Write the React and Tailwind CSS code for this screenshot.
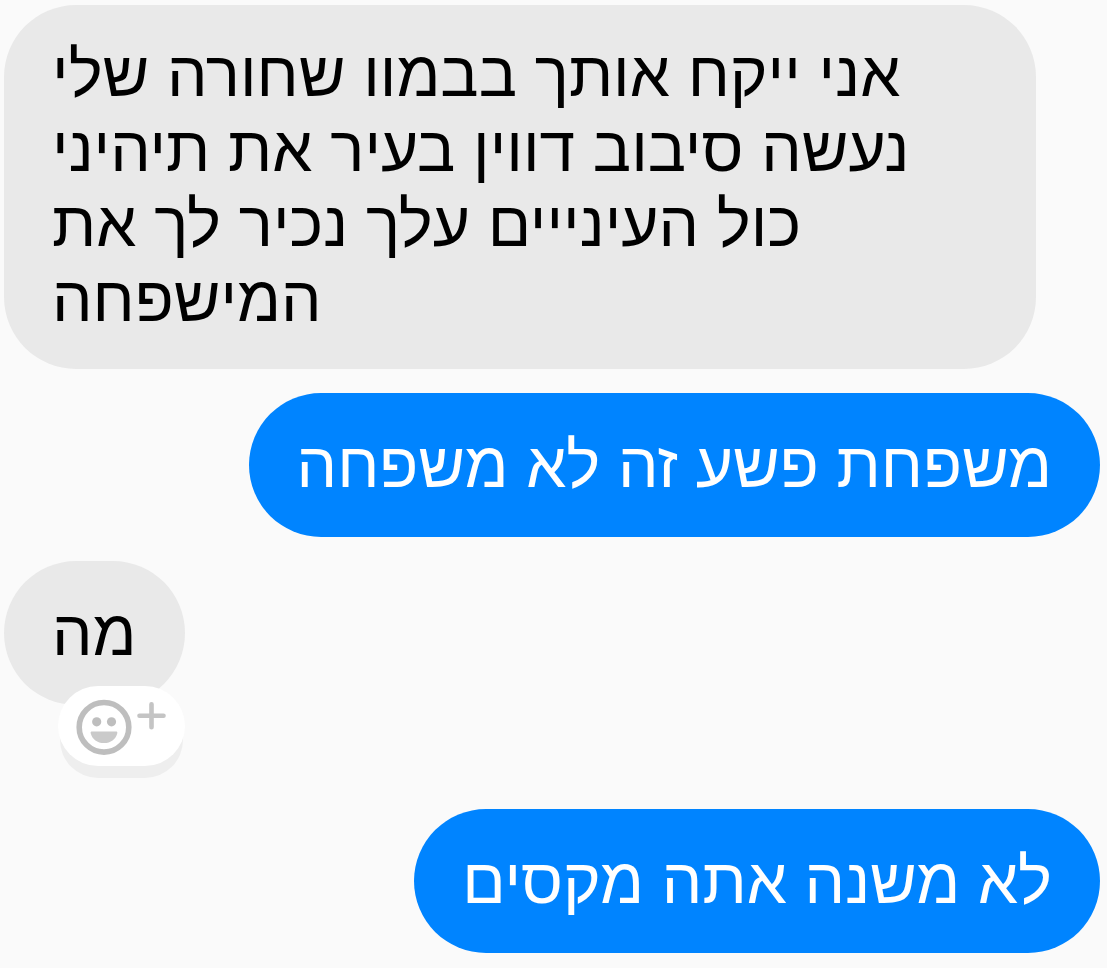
import React from "react";

function ReactionButton() {
  return (
    <button
      type="button"
      aria-label="הוספת תגובה"
      className="absolute top-[125px] left-[54px] h-20 w-[127px] rounded-full bg-white shadow-[0_14px_0_-2px_#eeeeee]"
    >
      <svg viewBox="0 0 127 80" fill="none" className="block h-20 w-[127px]">
        <circle cx="46" cy="41.3" r="24.8" stroke="#bebebe" strokeWidth="5.6" />
        <circle cx="38.7" cy="35.8" r="4.6" fill="#bebebe" />
        <circle cx="53.5" cy="35.8" r="4.6" fill="#bebebe" />
        <path
          d="M34 45.6h24c1 0 1.6.6 1.3 1.6C57.6 53.4 52.8 57 46 57s-11.6-3.6-13.3-9.8c-.3-1 .3-1.6 1.3-1.6Z"
          fill="#cacaca"
        />
        <path
          d="M81.5 29.8h24M93.5 18.3v23"
          stroke="#c4c4c4"
          strokeWidth="4.6"
          strokeLinecap="round"
        />
      </svg>
    </button>
  );
}

function Bubble({ mine = false, children }) {
  return (
    <div
      dir="rtl"
      className={`flex min-h-36 items-center rounded-[72px] px-12 py-8 ${
        mine ? "bg-[#0084ff] text-white" : "bg-[#e9e9e9] text-black"
      }`}
    >
      <p className="text-left">{children}</p>
    </div>
  );
}

export default function App() {
  return (
    <main className="flex min-h-screen flex-col items-start gap-6 bg-[#fafafa] pt-[5px] pr-[7px] pb-[15px] pl-1 font-['Liberation_Sans',sans-serif] text-[64px] leading-[75px]">
      <div className="max-w-[calc(100%-64px)]">
        <Bubble>
          אני ייקח אותך בבמוו שחורה שלי נעשה סיבוב דווין בעיר את תיהיני כול העינייים עלך נכיר לך את המישפחה
        </Bubble>
      </div>
      <div className="max-w-[calc(100%-64px)] self-end">
        <Bubble mine>משפחת פשע זה לא משפחה</Bubble>
      </div>
      <div className="relative mb-20 max-w-[calc(100%-64px)]">
        <Bubble>מה</Bubble>
        <ReactionButton />
      </div>
      <div className="max-w-[calc(100%-64px)] self-end">
        <Bubble mine>לא משנה אתה מקסים</Bubble>
      </div>
    </main>
  );
}
